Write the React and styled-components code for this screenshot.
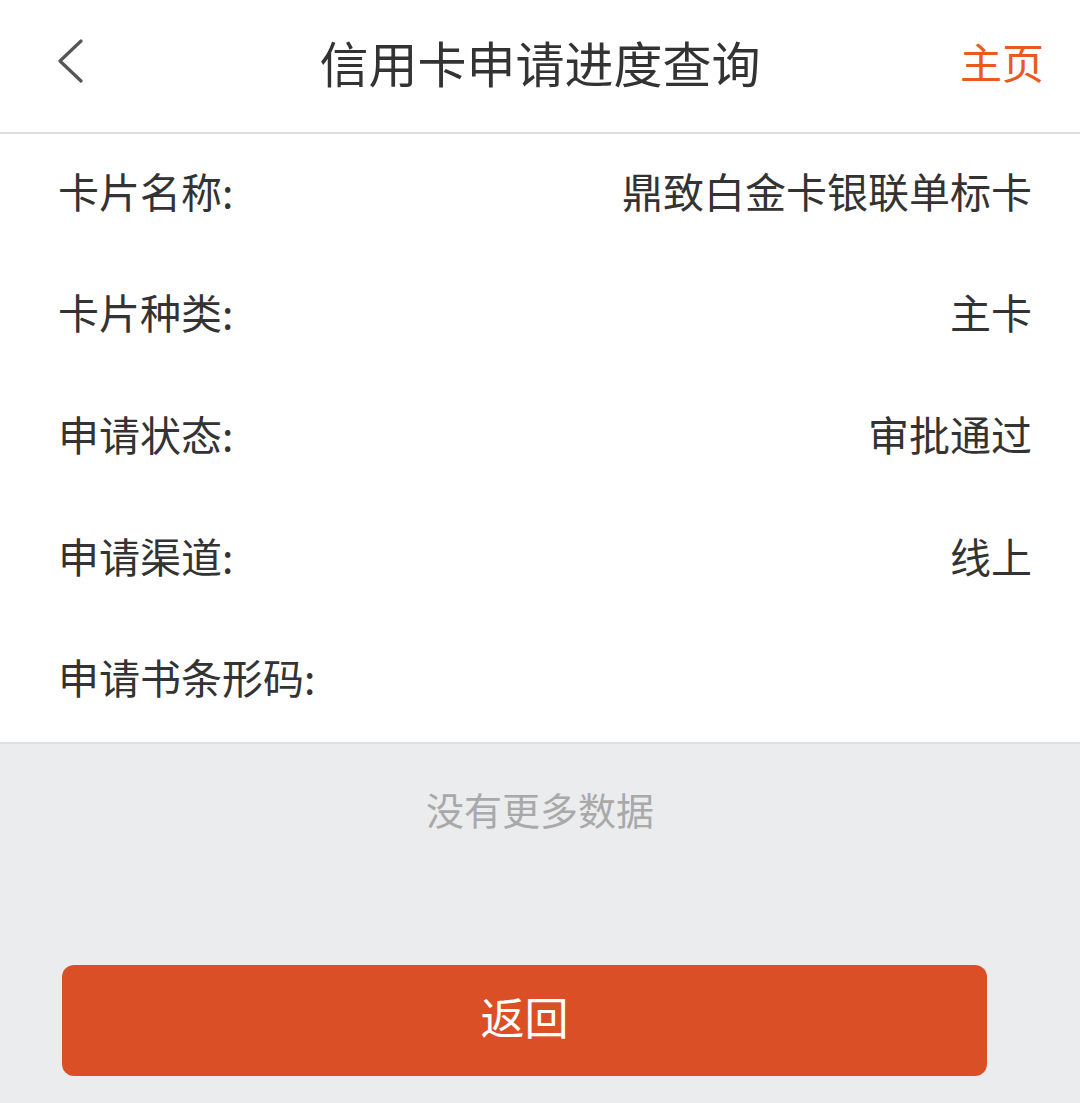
import React from "react";
import styled, { createGlobalStyle } from "styled-components";

const Global = createGlobalStyle`
  html, body { margin: 0; padding: 0; }
  body {
    background: #ebecee;
    font-family: "Noto Sans CJK SC", "Noto Sans", sans-serif;
  }
`;

const Page = styled.div`
  width: 1080px;
  min-height: 1103px;
  background: #ebecee;
  display: flex;
  flex-direction: column;
`;

const Header = styled.header`
  height: 122px;
  padding-bottom: 10px;
  background: #fff;
  border-bottom: 2px solid #dcdcdc;
  display: grid;
  grid-template-columns: 200px 1fr 200px;
  align-items: center;
  box-sizing: content-box;
`;

const BackButton = styled.button`
  justify-self: start;
  margin-left: 50px;
  background: none;
  border: none;
  padding: 0;
  width: 40px;
  height: 50px;
  display: flex;
  align-items: center;
  justify-content: center;
`;

const Title = styled.h1`
  margin: 0;
  text-align: center;
  font-size: 49px;
  font-weight: 400;
  color: #333;
  line-height: 1;
`;

const HomeLink = styled.a`
  justify-self: end;
  margin-right: 36px;
  color: #ea5a1f;
  font-size: 42px;
  line-height: 1;
`;

const List = styled.section`
  background: #fff;
  border-bottom: 2px solid #dfe0e0;
`;

const Row = styled.div`
  height: 121.6px;
  display: flex;
  align-items: center;
  justify-content: space-between;
  padding: 0 48px 10px 58px;
  box-sizing: border-box;
  font-size: 41px;
  color: #333;
`;

const Label = styled.span``;
const Value = styled.span``;

const NoMore = styled.div`
  text-align: center;
  color: #a9a9a9;
  font-size: 38px;
  padding-top: 46px;
  line-height: 1;
`;

const ReturnButton = styled.button`
  margin: 137px 0 0 62px;
  width: 925px;
  height: 111px;
  border: none;
  border-radius: 12px;
  background: #db4f26;
  color: #fff;
  font-family: inherit;
  font-size: 44px;
  padding: 0 0 8px;
  display: flex;
  align-items: center;
  justify-content: center;
`;

const rows = [
  ["卡片名称:", "鼎致白金卡银联单标卡"],
  ["卡片种类:", "主卡"],
  ["申请状态:", "审批通过"],
  ["申请渠道:", "线上"],
  ["申请书条形码:", ""],
];

export default function App() {
  return (
    <Page>
      <Global />
      <Header>
        <BackButton aria-label="返回">
          <svg width="30" height="44" viewBox="0 0 30 44">
            <path d="M26 2 L5 22 L26 42" fill="none" stroke="#555" strokeWidth="3.2" strokeLinecap="round" strokeLinejoin="round" />
          </svg>
        </BackButton>
        <Title>信用卡申请进度查询</Title>
        <HomeLink>主页</HomeLink>
      </Header>
      <List>
        {rows.map(([l, v]) => (
          <Row key={l}>
            <Label>{l}</Label>
            <Value>{v}</Value>
          </Row>
        ))}
      </List>
      <NoMore>没有更多数据</NoMore>
      <ReturnButton>返回</ReturnButton>
    </Page>
  );
}
